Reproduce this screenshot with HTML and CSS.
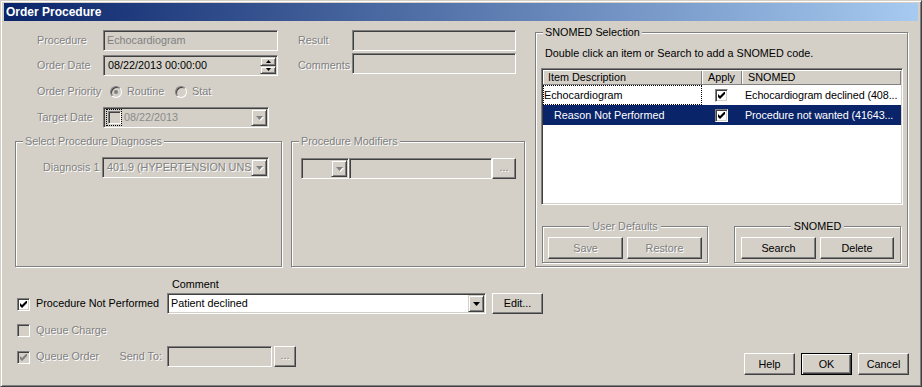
FILE: index.html
```html
<!DOCTYPE html>
<html lang="en">
<head>
<meta charset="utf-8">
<title>Order Procedure</title>
<link rel="stylesheet" href="styles.css">
</head>
<body>
<div class="window">
  <div class="titlebar">Order Procedure</div>
  <div class="client">
    <div class="upper">
      <div class="left">
        <div class="fields">
          <span class="lbl dis">Procedure</span>
          <div class="field"><span class="gray">Echocardiogram</span></div>
          <span class="lbl2 dis">Result</span>
          <div class="field"></div>

          <span class="lbl dis">Order Date</span>
          <div class="field spinfield">
            <span class="txt1">08/22/2013 00:00:00</span>
            <div class="spin">
              <span class="spinbtn"><svg class="arr" width="5" height="3" viewBox="0 0 5 3"><path d="M2.5 0L5 3H0z"/></svg></span>
              <span class="spinbtn"><svg class="arr" width="5" height="3" viewBox="0 0 5 3"><path d="M0 0h5L2.5 3z"/></svg></span>
            </div>
          </div>
          <span class="lbl2 dis">Comments</span>
          <div class="field shift"></div>

          <span class="lbl dis">Order Priority</span>
          <div class="radios">
            <span class="opt o1"><span class="radio"><span class="dot"></span></span><span class="dis">Routine</span></span>
            <span class="opt"><span class="radio"></span><span class="dis">Stat</span></span>
          </div>

          <span class="lbl dis">Target Date</span>
          <div class="field target">
            <span class="focusbox"><span class="cb face"></span></span>
            <span class="datetxt">08/22/2013</span>
            <span class="ddbtn"><svg class="arr off" width="7" height="4" viewBox="0 0 7 4"><path d="M0 0h7L3.5 4z"/></svg></span>
          </div>
        </div>

        <div class="groups">
          <fieldset class="group diag">
            <legend class="dis">Select Procedure Diagnoses</legend>
            <div class="drow">
              <span class="dlabel dis">Diagnosis 1</span>
              <div class="field combo-diag"><span class="dis">401.9 (HYPERTENSION UNS</span>
                <span class="ddbtn"><svg class="arr off" width="7" height="4" viewBox="0 0 7 4"><path d="M0 0h7L3.5 4z"/></svg></span>
              </div>
            </div>
          </fieldset>
          <fieldset class="group mods">
            <legend class="dis">Procedure Modifiers</legend>
            <div class="mrow">
              <div class="field combo-mod">
                <span class="ddbtn"><svg class="arr off" width="7" height="4" viewBox="0 0 7 4"><path d="M0 0h7L3.5 4z"/></svg></span>
              </div>
              <div class="field text-mod"></div>
              <span class="btn dots dis">...</span>
            </div>
          </fieldset>
        </div>
      </div>

      <fieldset class="group snomed">
        <legend>SNOMED Selection</legend>
        <div class="desc">Double click an item or Search to add a SNOMED code.</div>
        <div class="list">
          <div class="lhead">
            <div class="hc c1">Item Description</div>
            <div class="hc c2">Apply</div>
            <div class="hc c3">SNOMED</div>
          </div>
          <div class="lrow">
            <div class="lc c1 focus">Echocardiogram</div>
            <div class="lc c2"><span class="cb"><svg width="7" height="7" viewBox="0 0 7 7"><path d="M0 2L2 4L7 -1V2L2 7L0 5z"/></svg></span></div>
            <div class="lc c3">Echocardiogram declined (408...</div>
          </div>
          <div class="lrow sel">
            <div class="lc c1 indent">Reason Not Performed</div>
            <div class="lc c2"><span class="cb"><svg width="7" height="7" viewBox="0 0 7 7"><path d="M0 2L2 4L7 -1V2L2 7L0 5z"/></svg></span></div>
            <div class="lc c3">Procedure not wanted (41643...</div>
          </div>
        </div>
        <div class="subs">
          <fieldset class="group sub sub1">
            <legend class="dis">User Defaults</legend>
            <div class="sbtns">
              <span class="btn b75 dis">Save</span>
              <span class="btn b75 dis">Restore</span>
            </div>
          </fieldset>
          <fieldset class="group sub sub2">
            <legend>SNOMED</legend>
            <div class="sbtns">
              <span class="btn b75">Search</span>
              <span class="btn b74">Delete</span>
            </div>
          </fieldset>
        </div>
      </fieldset>
    </div>

    <div class="lower">
      <div class="lgrid">
        <span class="comment-lbl">Comment</span>

        <label class="chk"><span class="cb"><svg width="7" height="7" viewBox="0 0 7 7"><path d="M0 2L2 4L7 -1V2L2 7L0 5z"/></svg></span><span>Procedure Not Performed</span></label>
        <div class="field white comment-combo"><span>Patient declined</span>
          <span class="ddbtn"><svg class="arr" width="7" height="4" viewBox="0 0 7 4"><path d="M0 0h7L3.5 4z"/></svg></span>
        </div>
        <span class="btn edit">Edit...</span>

        <label class="chk r3"><span class="cb face"></span><span class="dis">Queue Charge</span></label>

        <div class="chk r4"><span class="cb face off"><svg width="7" height="7" viewBox="0 0 7 7"><path d="M0 2L2 4L7 -1V2L2 7L0 5z"/></svg></span><span class="dis">Queue Order</span><span class="sendto dis">Send To:</span></div>
        <div class="sendrow">
          <div class="field sendbox"></div>
          <span class="btn dots2 dis">...</span>
        </div>
      </div>
      <div class="dlg">
        <span class="btn db">Help</span>
        <span class="btn db default">OK</span>
        <span class="btn db">Cancel</span>
      </div>
    </div>
  </div>
</div>
</body>
</html>
```

FILE: styles.css
```css
* { box-sizing: border-box; }
html, body { margin: 0; padding: 0; }
body {
  width: 922px;
  height: 387px;
  overflow: hidden;
  background: #d4d0c8;
  font-family: "Liberation Sans", Arial, sans-serif;
  font-size: 10.8px;
  line-height: 13px;
  color: #000;
}

.window {
  width: 922px;
  height: 387px;
  display: flex;
  flex-direction: column;
  background: #d4d0c8;
  border: 1px solid;
  border-color: #d4d0c8 #404040 #404040 #d4d0c8;
  box-shadow: inset 1px 1px #fff, inset -1px -1px #808080;
  padding: 2px 3px 3px;
}
.titlebar {
  flex: none;
  height: 18px;
  padding-left: 2px;
  background: linear-gradient(to right, #0a246a, #a6caf0);
  color: #fff;
  font-weight: bold;
  font-size: 12px;
  line-height: 18px;
}
.client { flex: 1; display: flex; flex-direction: column; }
.upper { display: flex; align-items: flex-start; }
.left { width: 521px; flex: none; }

.dis { color: #808080; text-shadow: 1px 1px 0 #fff; }
.gray { color: #808080; }

/* form grid */
.fields {
  display: grid;
  grid-template-columns: 99px 175px 74px 164px;
  grid-template-rows: 21px 21px 23px 21px;
  row-gap: 4px;
  align-items: center;
  margin-top: 9px;
}
.lbl { padding-left: 33px; white-space: nowrap; }
.lbl2 { padding-left: 20px; }

/* sunken field */
.field {
  height: 21px;
  display: flex;
  align-items: center;
  padding: 0 2px 0 3px;
  background: #d4d0c8;
  border: 1px solid;
  border-color: #808080 #fff #fff #808080;
  box-shadow: inset 1px 1px #404040, inset -1px -1px #d4d0c8;
  white-space: nowrap;
  overflow: hidden;
}
.field.white { background: #fff; }
.field.shift { align-self: start; margin-top: -2px; }
.txt1 { padding-left: 1px; }

.spin {
  margin-left: auto;
  margin-right: -1px;
  width: 16px;
  height: 17px;
  display: flex;
  flex-direction: column;
}
.spinbtn {
  flex: 1;
  display: flex;
  align-items: center;
  justify-content: center;
  background: #d4d0c8;
  border: 1px solid;
  border-color: #d4d0c8 #404040 #404040 #d4d0c8;
  box-shadow: inset 1px 1px #fff, inset -1px -1px #808080;
}

.arr { display: block; fill: #000; }
.arr.off { fill: #808080; filter: drop-shadow(1px 1px 0 #fff); }

.ddbtn {
  flex: none;
  width: 16px;
  height: 17px;
  margin-left: auto;
  margin-right: -1px;
  display: flex;
  align-items: center;
  justify-content: center;
  background: #d4d0c8;
  border: 1px solid;
  border-color: #d4d0c8 #404040 #404040 #d4d0c8;
  box-shadow: inset 1px 1px #fff, inset -1px -1px #808080;
}

/* radios */
.radios { grid-column: 2 / 5; display: flex; align-items: center; padding-left: 7px; }
.opt { display: flex; align-items: center; gap: 5px; }
.opt.o1 { width: 65px; }
.radio {
  width: 12px;
  height: 12px;
  border-radius: 50%;
  border: 1px solid;
  border-color: #808080 #fff #fff #808080;
  box-shadow: inset 1px 1px #404040;
  background: #d4d0c8;
  display: flex;
  align-items: center;
  justify-content: center;
}
.dot { width: 4px; height: 4px; border-radius: 50%; background: #808080; }

/* target date */
.target { width: 166px; padding-left: 2px; }
.focusbox {
  flex: none;
  width: 16px;
  height: 17px;
  border: 1px dotted #000;
  display: flex;
  align-items: center;
  justify-content: center;
}
.datetxt { margin-left: 2px; color: #8a8a8a; }

/* checkbox */
.cb {
  flex: none;
  width: 13px;
  height: 13px;
  display: flex;
  align-items: center;
  justify-content: center;
  background: #fff;
  border: 1px solid;
  border-color: #808080 #fff #fff #808080;
  box-shadow: inset 1px 1px #404040, inset -1px -1px #d4d0c8;
}
.cb svg { display: block; fill: #000; }
.cb.face { background: #d4d0c8; }
.cb.off svg { fill: #808080; }

/* group boxes */
.group {
  margin: 0;
  padding: 0;
  min-width: 0;
  border: 1px solid #808080;
  box-shadow: inset 1px 1px #fff, 1px 1px #fff;
}
.group > legend {
  padding: 0 2px;
  margin-left: 7px;
  line-height: 13px;
  background: #d4d0c8;
}
.groups { display: flex; gap: 9px; margin: 7px 0 0 11px; }
.diag { width: 267px; height: 132px; }
.mods { width: 234px; height: 132px; }

.drow { display: flex; align-items: center; margin: 9px 0 0 27px; }
.dlabel { width: 59px; white-space: nowrap; }
.combo-diag { width: 167px; padding-left: 4px; }

.mrow { display: flex; align-items: center; margin: 10px 0 0 9px; }
.combo-mod { width: 48px; }
.text-mod { width: 143px; }

/* buttons */
.btn {
  flex: none;
  height: 22px;
  display: flex;
  align-items: center;
  justify-content: center;
  background: #d4d0c8;
  border: 1px solid;
  border-color: #fff #404040 #404040 #fff;
  box-shadow: inset -1px -1px #808080;
  white-space: nowrap;
}
.dots { width: 24px; height: 21px; padding-bottom: 2px; }
.dots2 { width: 22px; height: 21px; margin-left: 2px; padding-bottom: 2px; }
.b75 { width: 75px; }
.b74 { width: 74px; }

/* SNOMED selection */
.snomed { width: 373px; margin: 5px 0 0 10px; padding: 0 0 3px; }
.desc { margin: 8px 0 0 9px; white-space: nowrap; }
.list {
  width: 362px;
  height: 137px;
  margin: 8px 0 0 5px;
  padding: 1px;
  background: #fff;
  border: 1px solid;
  border-color: #808080 #fff #fff #808080;
  box-shadow: inset 1px 1px #404040, inset -1px -1px #d4d0c8;
  overflow: hidden;
}
.lhead {
  display: flex;
  height: 15px;
  background: #d4d0c8;
  border-bottom: 1px solid #808080;
}
.hc {
  height: 14px;
  line-height: 14px;
  box-shadow: inset 1px 1px #fff, inset -1px 0 #808080;
  white-space: nowrap;
}
.c1 { width: 159px; flex: none; }
.c2 { width: 40px; flex: none; }
.c3 { flex: 1; min-width: 0; }
.hc.c1 { padding-left: 5px; }
.hc.c2 { padding-left: 6px; }
.hc.c3 { padding-left: 6px; }

.lrow { display: flex; height: 20px; }
.lc {
  height: 20px;
  display: flex;
  align-items: center;
  white-space: nowrap;
  overflow: hidden;
}
.lc.c1 { padding-left: 1px; }
.lc.c1.indent { padding-left: 11px; }
.lc.c2 { padding-left: 13px; }
.lc.c3 { padding-left: 3px; letter-spacing: -0.1px; }
.focus { outline: 1px dotted #000; outline-offset: -1px; }
.lrow.sel { background: #0a246a; color: #fff; }

.subs { display: flex; gap: 26px; margin: 15px 0 0 6px; }
.sub { padding: 0 5px 3px; }
.sub > legend { margin: 0 auto; padding: 0 3px; }
.sub1 { width: 166px; }
.sub2 { width: 167px; padding: 0 6px 3px; }
.sbtns { display: flex; gap: 4px; margin-top: 4px; }

/* lower part */
.lower { display: flex; margin-top: 11px; }
.lgrid {
  display: grid;
  grid-template-columns: 163px 319px 6px 51px;
  grid-template-rows: 15px 21px 32px 21px;
  align-items: center;
}
.comment-lbl { grid-column: 2; align-self: start; padding-left: 5px; }
.chk { grid-column: 1; display: flex; align-items: center; gap: 6px; padding-left: 13px; white-space: nowrap; }
.chk .cb { margin-top: 1px; }
.comment-combo { grid-column: 2; width: 319px; }
.edit { grid-column: 4; width: 51px; height: 21px; }
.r3 { grid-row: 3; }
.r4 { grid-row: 4; padding-right: 5px; }
.sendto { margin-left: auto; }
.sendrow { grid-row: 4; grid-column: 2; display: flex; align-items: center; }
.sendbox { width: 105px; }

.dlg { display: flex; gap: 6px; margin: 75px 9px 0 auto; align-self: flex-start; }
.db { width: 51px; }
.btn.default {
  border: 1px solid #000;
  box-shadow: inset 1px 1px #fff, inset -1px -1px #404040, inset -2px -2px #808080;
}
```
